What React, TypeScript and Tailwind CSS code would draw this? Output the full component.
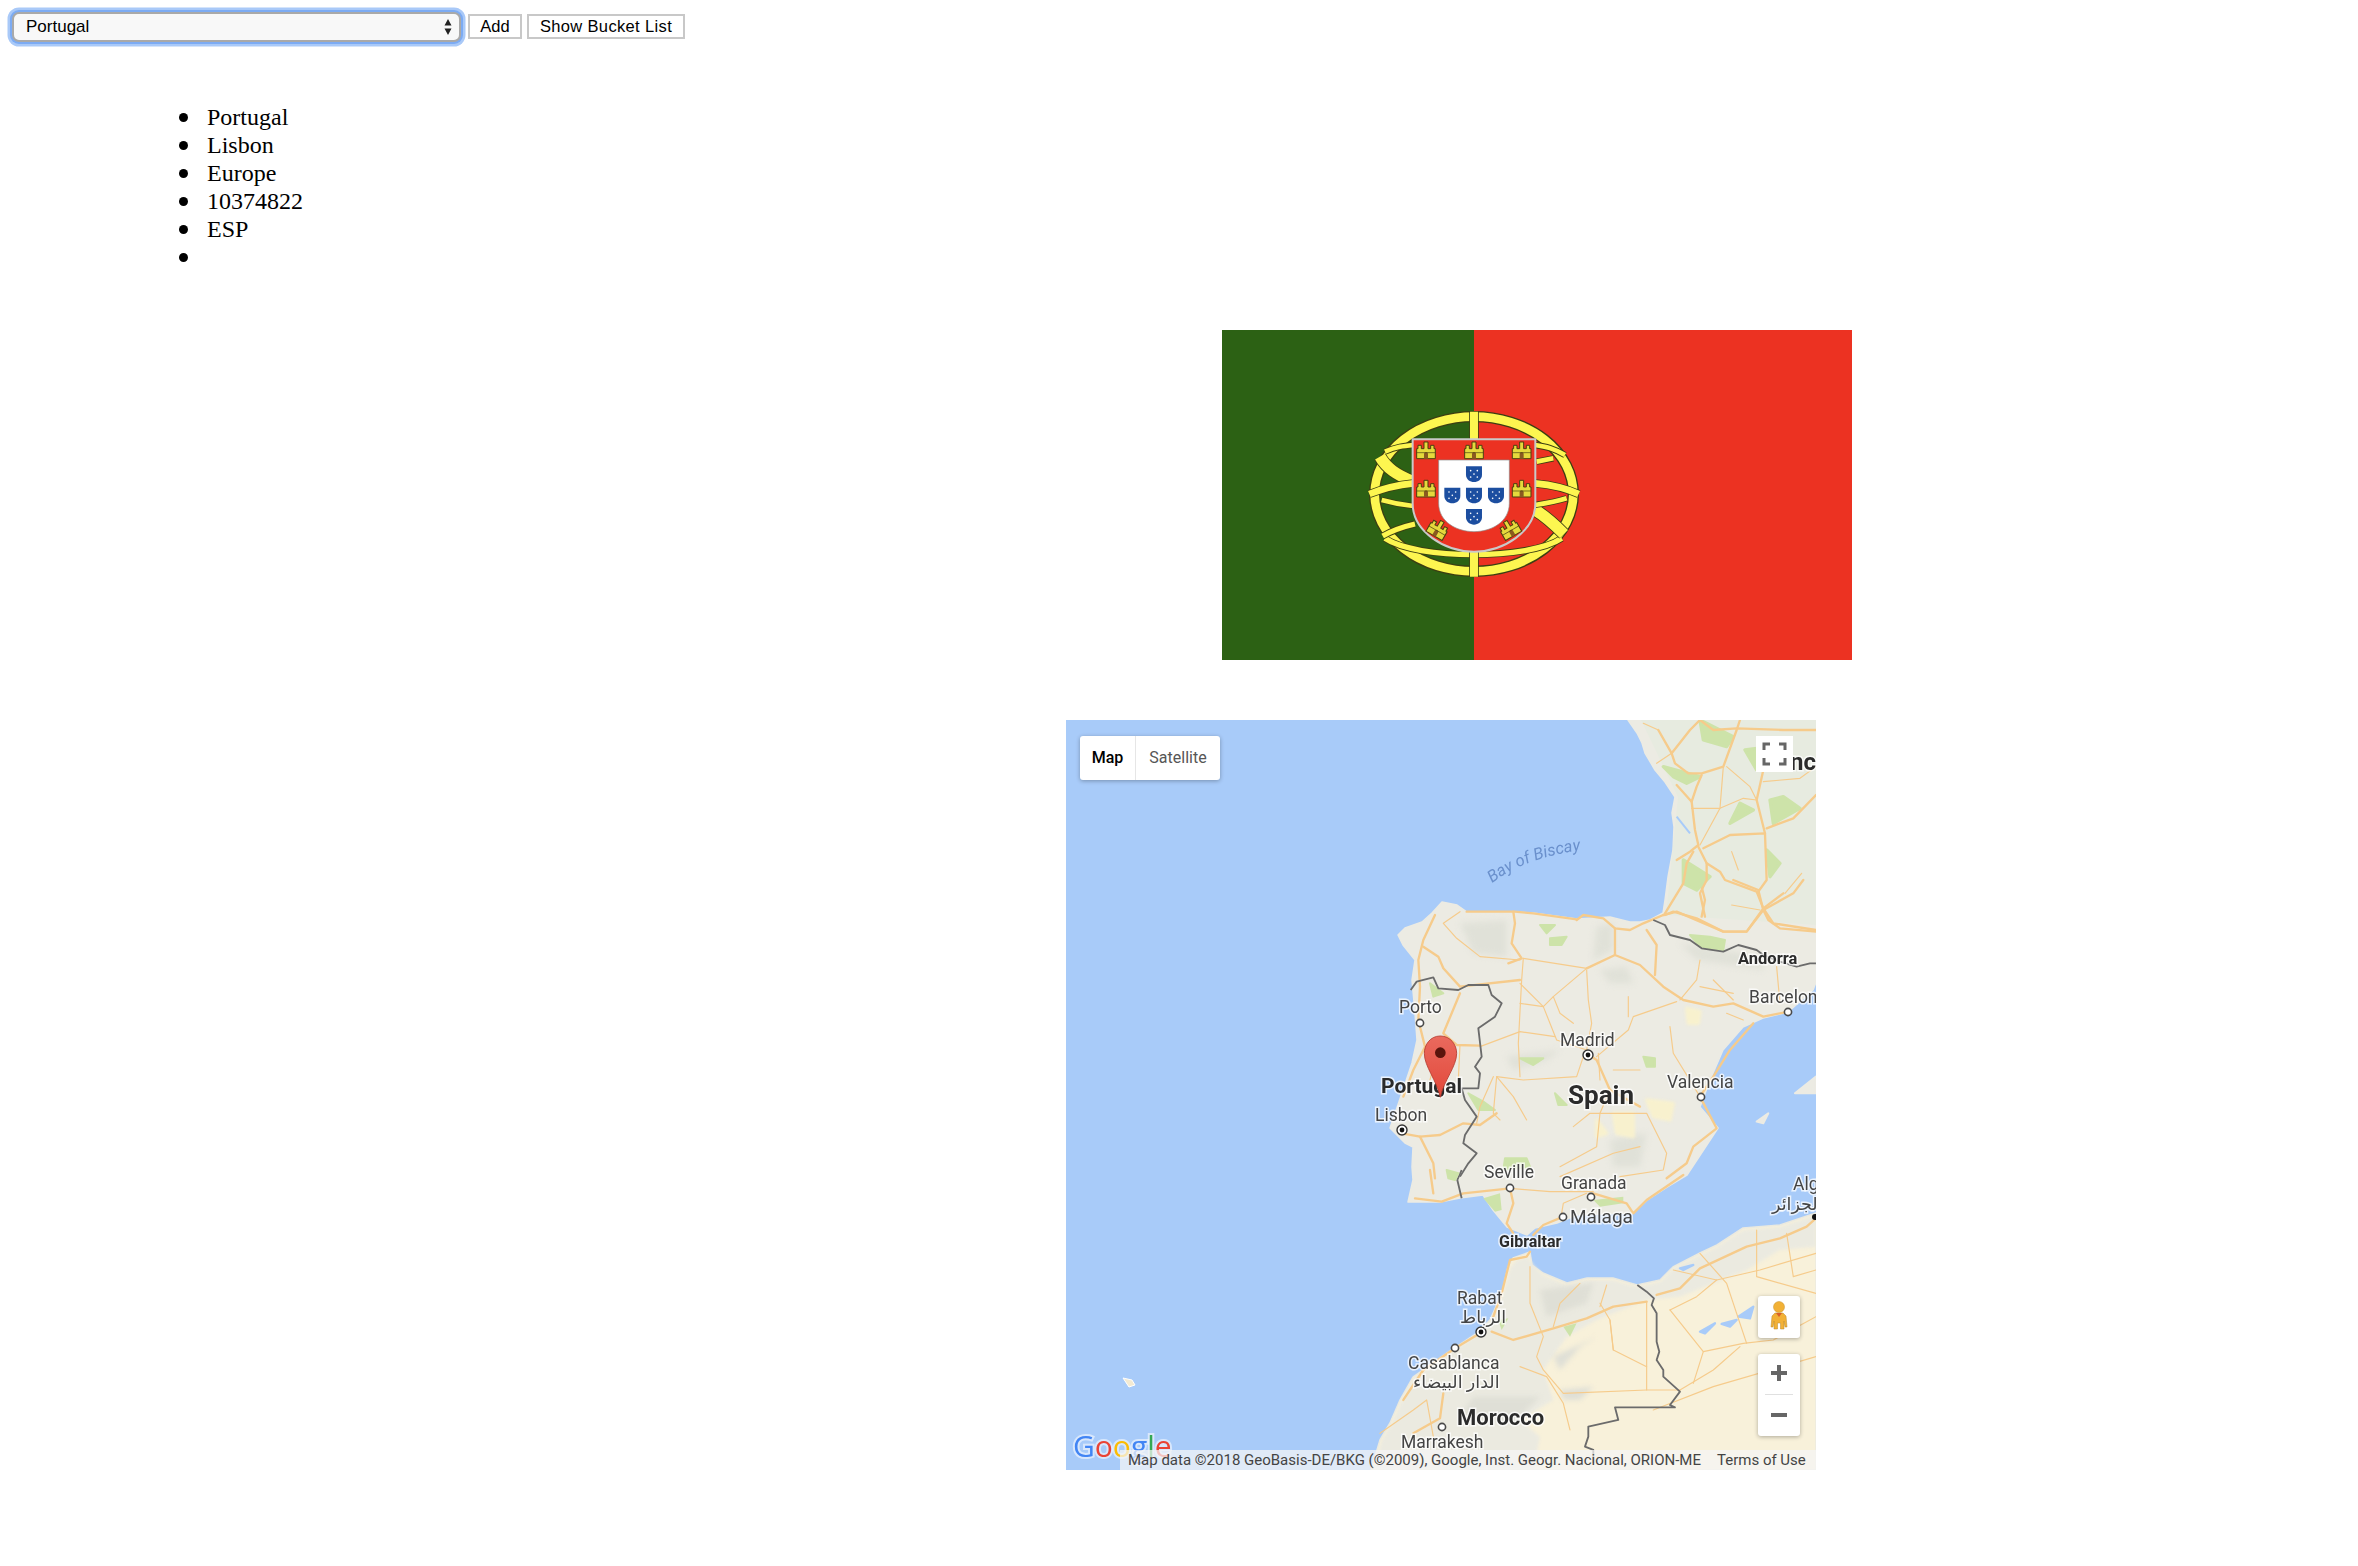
import React from "react";

// roads traced on the Iberia crop
const iberiaMajor = [
  "M165 105 130 180 115 240 120 320 115 420 135 500 100 570 70 650",
  "M260 95 405 95 460 100 590 118",
  "M400 95 405 130 395 190 425 235 385 250",
  "M590 120 610 105 670 115 705 145 750 150 790 130 850 105",
  "M705 145 705 225 780 255 850 320 910 360 1000 380 1060 370 1150 410 1225 395",
  "M705 225 620 265",
  "M130 200 175 230 190 265 240 320 420 300",
  "M240 340 190 460 230 495 300 497",
  "M65 760 120 770 180 765 250 730 300 735 350 700",
  "M120 770 160 850 165 895",
  "M1120 430 1050 510 1000 590 960 650 1010 745 940 800 920 850 860 895",
  "M850 105 890 95 1030 155 1100 155 1150 90 1135 30 1060 0",
  "M1150 90 1240 40 1270 0",
  "M1150 90 1165 120 1200 145 1308 155",
  "M960 0 975 60 965 110",
  "M800 150 830 195 825 285",
  "M620 520 650 540 690 630 780 680",
];
const iberiaMinor = [
  "M430 235 620 265 520 350 490 380 530 480 620 510",
  "M430 235 425 300 415 490 420 590",
  "M490 380 420 310",
  "M300 500 420 455 525 470",
  "M610 530 590 590 430 600 350 590 340 700 360 720",
  "M870 440 880 520 960 650",
  "M700 570 780 570",
  "M650 530 745 450 760 410 890 365",
  "M620 270 625 360 635 430 620 510",
  "M240 495 235 600",
  "M655 520 660 600",
  "M580 740 630 700 800 700 860 820 850 870 720 890",
  "M240 95 190 130 230 175 300 230 420 240",
  "M1000 300 1060 360",
  "M1190 260 1200 370",
  "M960 240 950 300 900 360",
  "M420 370 490 380",
  "M340 590 300 680 290 730",
  "M520 350 540 400 580 430",
  "M745 350 745 410",
  "M350 590 400 650 440 720",
  "M690 630 660 700 650 800 540 860",
  "M200 500 160 560 150 600",
  "M960 320 1060 340",
  "M1090 420 1040 400",
  "M540 890 700 820 780 800",
];
const africaMajor = [
  "M105 85 185 95 250 70 390 55",
  "M335 485 400 510 520 475 620 445 700 410 800 395",
  "M830 375 900 355 960 295 1100 230 1200 205 1280 170 1308 145",
  "M300 490 225 535 130 600 70 690",
  "M190 670 180 745 100 790",
  "M450 245 440 260 390 270 365 370 340 440",
  "M150 0 160 70",
  "M390 55 400 100 380 160 400 190",
  "M460 195 490 165 550 140",
  "M640 70 740 100 760 130 800 90 910 15",
];
const africaMinor = [
  "M390 55 510 65 640 65",
  "M545 130 550 100 620 70",
  "M450 290 450 400 490 500 470 560 490 600 550 670 800 660 900 660",
  "M800 395 800 660",
  "M690 450 700 540 800 590",
  "M870 420 970 545 1090 520 1180 510 1308 440",
  "M970 545 940 640",
  "M960 250 1040 340 1100 520",
  "M1130 180 1130 320 1308 370",
  "M880 300 1010 330 1140 300 1308 250",
  "M420 590 500 620 550 700 570 780",
  "M0 790 100 720 140 690 160 800",
  "M600 340 540 400 520 470",
  "M700 540 690 450 660 400",
  "M1220 190 1240 320 1308 300",
  "M1010 330 950 380 870 420",
  "M900 660 1000 600 1080 530",
  "M820 720 1000 650 1308 560",
  "M680 345 660 410",
];
const franceMajor = [
  "M175 30 215 100 225 130 265 160 305 160 370 140 410 30 420 0",
  "M300 0 340 30 410 25 550 30 648 30",
  "M305 165 290 200 275 245 285 330 295 375 270 395 230 420",
  "M230 195 275 245",
  "M295 380 320 430 360 455 375 480 470 515 490 565 440 635 370 635 290 595 220 575 195 585",
  "M280 395 260 430 250 490 195 580",
  "M320 430 320 480 300 520 315 590",
  "M310 385 390 345 495 340 500 480 475 515",
  "M495 340 470 240 490 150",
  "M500 325 580 295 648 225",
  "M490 565 550 520",
  "M490 565 520 610 648 630",
  "M215 100 270 30 300 0",
];
const franceMinor = [
  "M370 140 360 265 300 375",
  "M275 265 360 265 430 235 470 240",
  "M175 30 130 10",
  "M215 100 170 130",
  "M490 185 600 175 648 140",
  "M380 140 450 200 470 240",
  "M395 555 480 570",
  "M555 520 605 460",
  "M395 395 415 450",
];

const iberiaGreen = [
  "M480 135 525 135 500 160Z",
  "M510 175 560 170 545 195 510 195Z",
  "M420 535 490 535 460 555Z",
  "M790 530 825 535 825 560 800 560Z",
  "M265 640 310 665 345 690 295 690Z",
  "M930 165 990 170 1035 180 1030 210 960 200Z",
  "M375 835 440 835 450 860 370 870Z",
  "M525 640 560 675 535 675Z",
  "M200 870 235 880 225 900 205 895Z",
  "M150 310 190 340 160 350Z",
];
const iberiaYellow = [
  "M920 385 960 395 955 430 925 430Z",
  "M800 660 880 670 870 720 820 710Z",
  "M700 700 760 700 760 770 710 760Z",
  "M650 720 680 760 650 770Z",
];
const iberiaShade = [
  "M240 130 380 120 380 230 280 220Z",
  "M650 140 700 130 700 210 640 240Z",
  "M900 190 1150 230 1150 270 950 240Z",
  "M660 270 740 260 760 310 690 310Z",
  "M690 780 800 760 780 860 700 860Z",
  "M380 530 540 510 500 540 400 570Z",
];
const franceGreen = [
  "M190 140 300 170 260 190 220 170Z",
  "M420 250 460 270 390 310Z",
  "M510 240 550 230 600 265 520 310Z",
  "M500 390 540 430 510 470Z",
  "M250 420 330 470 290 510 250 490Z",
  "M300 0 400 50 380 80 310 60Z",
  "M435 90 470 85 470 150Z",
];
const africaGreen = [
  "M310 85 360 70 365 120 345 125Z",
  "M640 90 730 80 730 100 660 110Z",
  "M550 470 590 460 570 500Z",
  "M355 450 385 445 365 480Z",
];
const africaLakes = [
  "M960 485 1005 460 975 490Z",
  "M1025 462 1070 450 1050 470Z",
  "M1075 440 1120 410 1110 445Z",
  "M900 295 940 285 910 300Z",
];
const africaShade = [
  "M480 360 640 340 620 400 500 440Z",
  "M520 560 650 500 600 530 540 600Z",
  "M540 660 640 650 600 690 550 690Z",
  "M280 680 480 680 400 760 240 740Z",
];

const Roads = ({ major, minor }: { major: string[]; minor: string[] }) => (
  <g fill="none" stroke="#f6cb8b" strokeLinejoin="round" strokeLinecap="round">
    {minor.map((d) => (
      <path key={d} d={d} strokeWidth="3.500" />
    ))}
    {major.map((d) => (
      <path key={d} d={d} strokeWidth="7" />
    ))}
  </g>
);

const Label = ({
  x,
  y,
  size = 17.5,
  bold,
  children,
}: {
  x: number;
  y: number;
  size?: number;
  bold?: boolean;
  children: React.ReactNode;
}) => (
  <text
    x={x}
    y={y}
    fontSize={size}
    fontWeight={bold ? 700 : 400}
    fill={bold ? "#2b2b2b" : "#444444"}
    stroke="#ffffff"
    strokeOpacity="0.75"
    strokeWidth="3"
    className="font-['Roboto','DejaVu_Sans',sans-serif] [paint-order:stroke]"
  >
    {children}
  </text>
);

const City = ({ x, y, capital }: { x: number; y: number; capital?: boolean }) =>
  capital ? (
    <g>
      <circle cx={x} cy={y} r="5" fill="#ffffff" stroke="#333333" strokeWidth="1.4" />
      <circle cx={x} cy={y} r="2.4" fill="#111111" />
    </g>
  ) : (
    <circle cx={x} cy={y} r="3.6" fill="#ffffff" stroke="#4a4a4a" strokeWidth="1.6" />
  );

const MapCanvas = () => (
  <svg viewBox="0 0 750 750" className="absolute inset-0 w-full h-full blur-[0.4px]">
    <rect width="750" height="750" fill="#a8cbf9" />

    {/* Europe */}
    <path
      d="M562 0 571 13 576 23 579 33 589 50 599 62 609 77 606 93 608 107 607 130 602 157 599 180 597 193 584 200 574 202 564 202 544 197 527 198 511 199 467 193 447 192 401 192 391 185 376 182 366 193 356 202 339 208 332 215 337 225 349 240 346 260 349 293 351 320 346 343 336 373 324 408 339 423 347 427 346 447 347 460 342 482 374 482 394 478 417 475 427 490 441 507 461 515 469 508 491 503 511 495 567 493 581 480 601 467 621 455 652 408 634 387 644 360 657 330 677 307 697 298 722 292 747 270 750 262 750 0Z"
      fill="#ecebe3"
      stroke="#ecebe3"
      strokeWidth="1.5"
      strokeLinejoin="round"
    />
    <path d="M575 0 612 77 600 195 750 205 750 0Z" fill="#e7ebe0" />

    {/* Africa */}
    <path
      d="M750 493 714 505 677 508 651 525 634 533 607 547 594 560 571 565 547 558 521 558 501 563 477 553 466 545 464 532 447 538 442 547 436 573 424 600 411 613 381 633 347 657 334 680 324 703 314 720 305 750 750 750Z"
      fill="#f8f1da"
      stroke="#ebeae0"
      strokeWidth="1.5"
      strokeLinejoin="round"
    />
    <g transform="translate(314 450) scale(0.3333)">
      <path
        d="M1308 135 1200 170 1090 180 1010 230 960 255 880 295 840 335 770 350 700 330 620 330 560 345 490 315 460 285 445 260 410 270 390 295 370 370 335 450 295 490 205 550 105 620 65 690 35 760 5 810 -20 900 460 900 480 800 420 750 520 690 490 600 560 500 650 450 800 390 900 380 1100 300 1200 240 1308 230Z"
        fill="#ebeae0"
        className="blur-[5px]"
      />
      {africaShade.map((d) => (
        <path key={d} d={d} fill="#dfdfd6" className="blur-[8px]" />
      ))}
      {africaGreen.map((d) => (
        <path key={d} d={d} fill="#cde3a9" className="blur-[2px]" />
      ))}
      {africaLakes.map((d) => (
        <path key={d} d={d} fill="#a8cbf9" stroke="#a8cbf9" strokeWidth="7" strokeLinejoin="round" />
      ))}
      <Roads major={africaMajor} minor={africaMinor} />
      <path
        d="M772 345 800 365 822 385 815 405 830 430 830 515 838 545 830 570 850 600 850 620 900 665 870 705 885 712 705 712 715 750 625 770 625 800 615 830 640 840 640 880"
        fill="none"
        stroke="#6b6b6b"
        strokeWidth="5.500"
        strokeLinejoin="round"
      />
      <path d="M245 0 232 30 245 85" fill="none" stroke="#6b6b6b" strokeWidth="5.500" />
    </g>

    {/* Iberia */}
    <g transform="translate(314 160) scale(0.3333)">
      {iberiaShade.map((d) => (
        <path key={d} d={d} fill="#e0e1d8" className="blur-[10px]" />
      ))}
      {iberiaGreen.map((d) => (
        <path key={d} d={d} fill="#cde3a9" strokeLinejoin="round" stroke="#cde3a9" strokeWidth="6" className="blur-[2px]" />
      ))}
      {iberiaYellow.map((d) => (
        <path key={d} d={d} fill="#f8f1ce" stroke="#f8f1ce" strokeWidth="10" strokeLinejoin="round" className="blur-[4px]" />
      ))}
      <Roads major={iberiaMajor} minor={iberiaMinor} />
      <path
        d="M92 330 110 305 160 292 175 325 235 330 265 315 325 315 335 345 365 370 345 410 295 445 305 530 285 560 300 580 295 625 245 625 255 660 290 710 255 765 250 790 290 820 265 850 240 890"
        fill="none"
        stroke="#6b6b6b"
        strokeWidth="5.500"
        strokeLinejoin="round"
      />
      <path
        d="M820 120 855 135 870 165 930 180 965 205 1030 215 1075 195 1130 210 1150 225 1200 245 1250 260 1290 250 1308 250"
        fill="none"
        stroke="#6b6b6b"
        strokeWidth="5.500"
        strokeLinejoin="round"
      />
      <path d="M1130 725 1165 700 1150 730Z" fill="#ecebe3" stroke="#ecebe3" strokeWidth="6" strokeLinejoin="round" />
      <path d="M1245 640 1308 590 1308 640Z" fill="#ecebe3" stroke="#ecebe3" strokeWidth="6" strokeLinejoin="round" />
    </g>

    {/* France */}
    <g transform="translate(534 0) scale(0.3333)">
      {franceGreen.map((d) => (
        <path key={d} d={d} fill="#cde3a9" strokeLinejoin="round" stroke="#cde3a9" strokeWidth="10" className="blur-[2px]" />
      ))}
      <path d="M230 290 270 340" stroke="#a8cbf9" strokeWidth="6" />
      <Roads major={franceMajor} minor={franceMinor} />
    </g>

    {/* Madeira */}
    <path d="M57 658 66 660 69 665 63 667Z" fill="#f3ead2" stroke="#ffffff" strokeWidth="1" />

    <path id="biscay" d="M426 163Q462 136 518 130" fill="none" />
    <text fontSize="16.5" fill="#6a90cc" fontStyle="italic" className="font-['Roboto',sans-serif]">
      <textPath href="#biscay">Bay of Biscay</textPath>
    </text>

    <City x={354} y={303} />
    <City x={722} y={292} />
    <City x={635} y={377} />
    <City x={522} y={335} capital />
    <City x={336} y={410} capital />
    <City x={444} y={468} />
    <City x={525} y={477} />
    <City x={497} y={497} />
    <City x={415} y={612} capital />
    <City x={389} y={628} />
    <City x={376} y={707} />
    <circle cx="749" cy="497" r="3" fill="#111111" />

    <Label x={690} y={50} size={24} bold>
      France
    </Label>
    <Label x={672} y={244} size={16.5} bold>
      Andorra
    </Label>
    <Label x={683} y={283}>
      Barcelona
    </Label>
    <Label x={333} y={293}>
      Porto
    </Label>
    <Label x={494} y={326}>
      Madrid
    </Label>
    <Label x={601} y={368}>
      Valencia
    </Label>
    <Label x={502} y={384} size={26} bold>
      Spain
    </Label>
    <Label x={315} y={373} size={21} bold>
      Portugal
    </Label>
    <Label x={309} y={401}>
      Lisbon
    </Label>
    <Label x={418} y={458}>
      Seville
    </Label>
    <Label x={495} y={469}>
      Granada
    </Label>
    <Label x={504} y={503} size={19}>
      Málaga
    </Label>
    <Label x={433} y={527} size={16} bold>
      Gibraltar
    </Label>
    <Label x={391} y={584}>
      Rabat
    </Label>
    <Label x={394} y={603}>
      الرباط
    </Label>
    <Label x={342} y={649}>
      Casablanca
    </Label>
    <Label x={347} y={668}>
      الدار البيضاء
    </Label>
    <Label x={391} y={705} size={22} bold>
      Morocco
    </Label>
    <Label x={335} y={728}>
      Marrakesh
    </Label>
    <Label x={727} y={470}>
      Algiers
    </Label>
    <Label x={706} y={490}>
      الجزائر
    </Label>

    {/* marker */}
    <defs>
      <linearGradient id="pin" x1="0" y1="0" x2="0" y2="1">
        <stop offset="0" stopColor="#ea6a5e" />
        <stop offset="1" stopColor="#e2483a" />
      </linearGradient>
    </defs>
    <g transform="translate(314 160) scale(0.3333)">
      <path
        d="M181 468C150 468 133 495 133 520 133 560 170 600 181 652 192 600 230 560 230 520 230 495 212 468 181 468Z"
        fill="url(#pin)"
        stroke="#b5382c"
        strokeWidth="2.5"
      />
      <circle cx="181" cy="518" r="16" fill="#5a140c" />
    </g>

    {/* logo */}
    <text
      x="7"
      y="737"
      fontSize="30"
      stroke="#ffffff"
      strokeOpacity="0.55"
      strokeWidth="4"
      className="font-['Open_Sans',sans-serif] [paint-order:stroke]"
    >
      <tspan fill="#4285f4">G</tspan>
      <tspan fill="#ea4335">o</tspan>
      <tspan fill="#fbbc05">o</tspan>
      <tspan fill="#4285f4">g</tspan>
      <tspan fill="#34a853">l</tspan>
      <tspan fill="#ea4335">e</tspan>
    </text>
  </svg>
);

const MapControls = () => (
  <>
    <div className="absolute left-[14px] top-[16px] flex h-[44px] w-[140px] rounded-[3px] bg-white font-['Roboto',sans-serif] text-[16px] shadow-[0_1px_4px_rgba(0,0,0,0.3)]">
      <div className="flex w-[56px] items-center justify-center border-r border-[#e6e6e6] font-medium text-black">
        Map
      </div>
      <div className="flex flex-1 items-center justify-center text-[#565656]">Satellite</div>
    </div>

    <div className="absolute left-[690px] top-[16px] h-[36px] w-[37px] bg-white">
      <svg viewBox="0 0 37 36" className="h-full w-full" fill="none" stroke="#666666" strokeWidth="3">
        <path d="M8 14V8H14M23 8H29V14M29 22V28H23M14 28H8V22" />
      </svg>
    </div>

    <div className="absolute left-[692px] top-[576px] h-[42px] w-[42px] rounded-[3px] bg-white shadow-[0_1px_4px_rgba(0,0,0,0.3)]">
      <svg viewBox="0 0 42 42" className="h-full w-full">
        <path
          d="M17 17H25L28 20 29 31H27L26 25V33H22.500V27H19.500V33H16V25L15 31H13L14 20Z"
          fill="#f2b136"
          stroke="#b98a2c"
          strokeWidth="0.5"
        />
        <path d="M18 17H24L21 21Z" fill="#d9602a" />
        <circle cx="21" cy="11" r="5.500" fill="#f2b136" stroke="#c9932f" strokeWidth="0.5" />
      </svg>
    </div>

    <div className="absolute left-[692px] top-[634px] flex h-[82px] w-[42px] flex-col items-center rounded-[3px] bg-white shadow-[0_1px_4px_rgba(0,0,0,0.3)]">
      <svg viewBox="0 0 42 40" className="h-[40px] w-[42px]" fill="#666666">
        <path d="M19 11H23V17H29V21H23V27H19V21H13V17H19Z" />
      </svg>
      <div className="h-px w-[28px] bg-[#e0e0e0]" />
      <svg viewBox="0 0 42 41" className="h-[41px] w-[42px]" fill="#666666">
        <path d="M13 18H29V22H13Z" />
      </svg>
    </div>

    <div className="absolute bottom-0 left-[54px] right-0 flex h-[20px] items-center bg-[rgba(245,245,245,0.72)] font-['Roboto',sans-serif] text-[15px] leading-[20px] text-[#444444]">
      <span className="ml-[8px] w-[583px] whitespace-nowrap">
        Map data ©2018 GeoBasis-DE/BKG (©2009), Google, Inst. Geogr. Nacional, ORION-ME
      </span>
      <span className="ml-[6px] whitespace-nowrap">Terms of Use</span>
    </div>
  </>
);

const Band = ({ d, w = 20 }: { d: string; w?: number }) => (
  <g fill="none" strokeLinecap="butt">
    <path d={d} stroke="#3c3f12" strokeWidth={w + 5} />
    <path d={d} stroke="#fdf650" strokeWidth={w} />
  </g>
);

const Castle = ({ x, y, rotate = 0 }: { x: number; y: number; rotate?: number }) => (
  <g transform={`translate(${x} ${y}) rotate(${rotate})`}>
    <path
      d="M-28 26V-4H-24V-14H-14V-4H-6V-24H6V-4H14V-14H24V-4H28V26Z"
      fill="#e5d93c"
      stroke="#4a3f10"
      strokeWidth="3"
    />
    <path d="M-6 26V12C-6 4 6 4 6 12V26Z" fill="#8a5a20" />
    <path d="M-28 8H28" stroke="#4a3f10" strokeWidth="2" />
  </g>
);

const Quina = ({ x, y }: { x: number; y: number }) => (
  <g transform={`translate(${x} ${y})`}>
    <path d="M-24 -23H24V2C24 16 12 24 0 24 -12 24 -24 16 -24 2Z" fill="#1c4ea0" />
    <g fill="#ffffff">
      <circle cx="-10" cy="-10" r="2.500" />
      <circle cx="10" cy="-10" r="2.500" />
      <circle cx="0" cy="0" r="2.500" />
      <circle cx="-10" cy="9" r="2.500" />
      <circle cx="10" cy="9" r="2.500" />
    </g>
  </g>
);

const Flag = () => (
  <svg viewBox="0 0 630 330" className="block h-[330px] w-[630px]">
    <rect width="630" height="330" fill="#ec3222" />
    <rect width="252" height="330" fill="#2c6114" />
    <g transform="translate(118 60) scale(0.3333)">
      <ellipse cx="402" cy="312" rx="298" ry="232" fill="none" stroke="#3c3f12" strokeWidth="34" />
      <ellipse cx="402" cy="312" rx="298" ry="232" fill="none" stroke="#fdf650" strokeWidth="26" />
      <Band d="M135 445C230 510 570 510 665 445" w={16} />
      <Band d="M120 200C140 235 170 255 220 275" w={34} />
      <Band d="M585 360C620 380 650 410 672 432" w={34} />
      <Band d="M135 185C170 170 190 168 220 165" w={14} />
      <Band d="M585 165C620 170 640 175 675 195" w={14} />
      <Band d="M88 312C130 295 170 285 220 280" w={20} />
      <Band d="M585 280C640 285 680 295 716 312" w={20} />
      <Band d="M125 330C160 340 190 345 220 348" w={14} />
      <Band d="M585 345C620 340 650 335 680 325" w={14} />
      <Band d="M128 438C160 420 190 410 225 402" w={16} />
      <Band d="M590 215 640 205" w={14} />
      <Band d="M402 65V560" w={24} />
      <path
        d="M218 148H586V340C586 425 490 485 402 485 314 485 218 425 218 340Z"
        fill="#ec3222"
        stroke="#c9c9c9"
        strokeWidth="6"
      />
      <path
        d="M296 210H508V340C508 395 455 425 402 425 349 425 296 395 296 340Z"
        fill="#ffffff"
        stroke="#8c8c8c"
        strokeWidth="2"
      />
      <Castle x={258} y={180} />
      <Castle x={402} y={180} />
      <Castle x={545} y={180} />
      <Castle x={258} y={295} />
      <Castle x={545} y={295} />
      <Castle x={295} y={415} rotate={30} />
      <Castle x={508} y={415} rotate={-30} />
      <Quina x={402} y={252} />
      <Quina x={337} y={316} />
      <Quina x={402} y={316} />
      <Quina x={468} y={316} />
      <Quina x={402} y={380} />
    </g>
  </svg>
);

const bullet =
  "relative h-[28px] before:absolute before:left-[-28px] before:top-[10px] before:h-[9px] before:w-[9px] before:rounded-full before:bg-black before:content-['']";

export default function App() {
  return (
    <div className="min-h-[1566px] bg-white">
      <div className="flex items-start pl-[12px] pt-[12px]">
        <div className="relative h-[30px] w-[449px]">
          <select
            defaultValue="Portugal"
            className="h-full w-full appearance-none rounded-[7px] border-2 border-[#a9a9a9] bg-[#f8f8f8] pl-[12px] font-['Liberation_Sans',sans-serif] text-[17px] text-black shadow-[0_0_0_2px_#7cabf3,0_0_0_4.5px_#a9c9f8] outline-none"
          >
            <option>Portugal</option>
          </select>
          <svg viewBox="0 0 8 16" className="pointer-events-none absolute right-[9px] top-[7px] h-[16px] w-[8px]" fill="#222222">
            <path d="M4 0 7.500 6.500H.5ZM4 16 .5 9.500H7.500Z" />
          </svg>
        </div>
        <div className="ml-[7px] mt-[2px] flex gap-[5px] font-['Liberation_Sans',sans-serif] text-[16.5px] text-black">
          <button className="h-[25px] w-[54px] border-2 border-[#c8c8c8] bg-white leading-none">Add</button>
          <button className="h-[25px] w-[158px] border-2 border-[#c8c8c8] bg-white leading-none tracking-[0.35px]">
            Show Bucket List
          </button>
        </div>
      </div>

      <ul className="ml-[207px] mt-[61px] list-none font-['Liberation_Serif',serif] text-[24px] leading-[28px] text-black">
        <li className={bullet}>Portugal</li>
        <li className={bullet}>Lisbon</li>
        <li className={bullet}>Europe</li>
        <li className={bullet}>10374822</li>
        <li className={bullet}>ESP</li>
        <li className={bullet}></li>
      </ul>

      <div className="ml-[1222px] mt-[59px] w-[630px]">
        <Flag />
      </div>

      <div className="relative ml-[1066px] mt-[60px] h-[750px] w-[750px] overflow-hidden">
        <MapCanvas />
        <MapControls />
      </div>
    </div>
  );
}
